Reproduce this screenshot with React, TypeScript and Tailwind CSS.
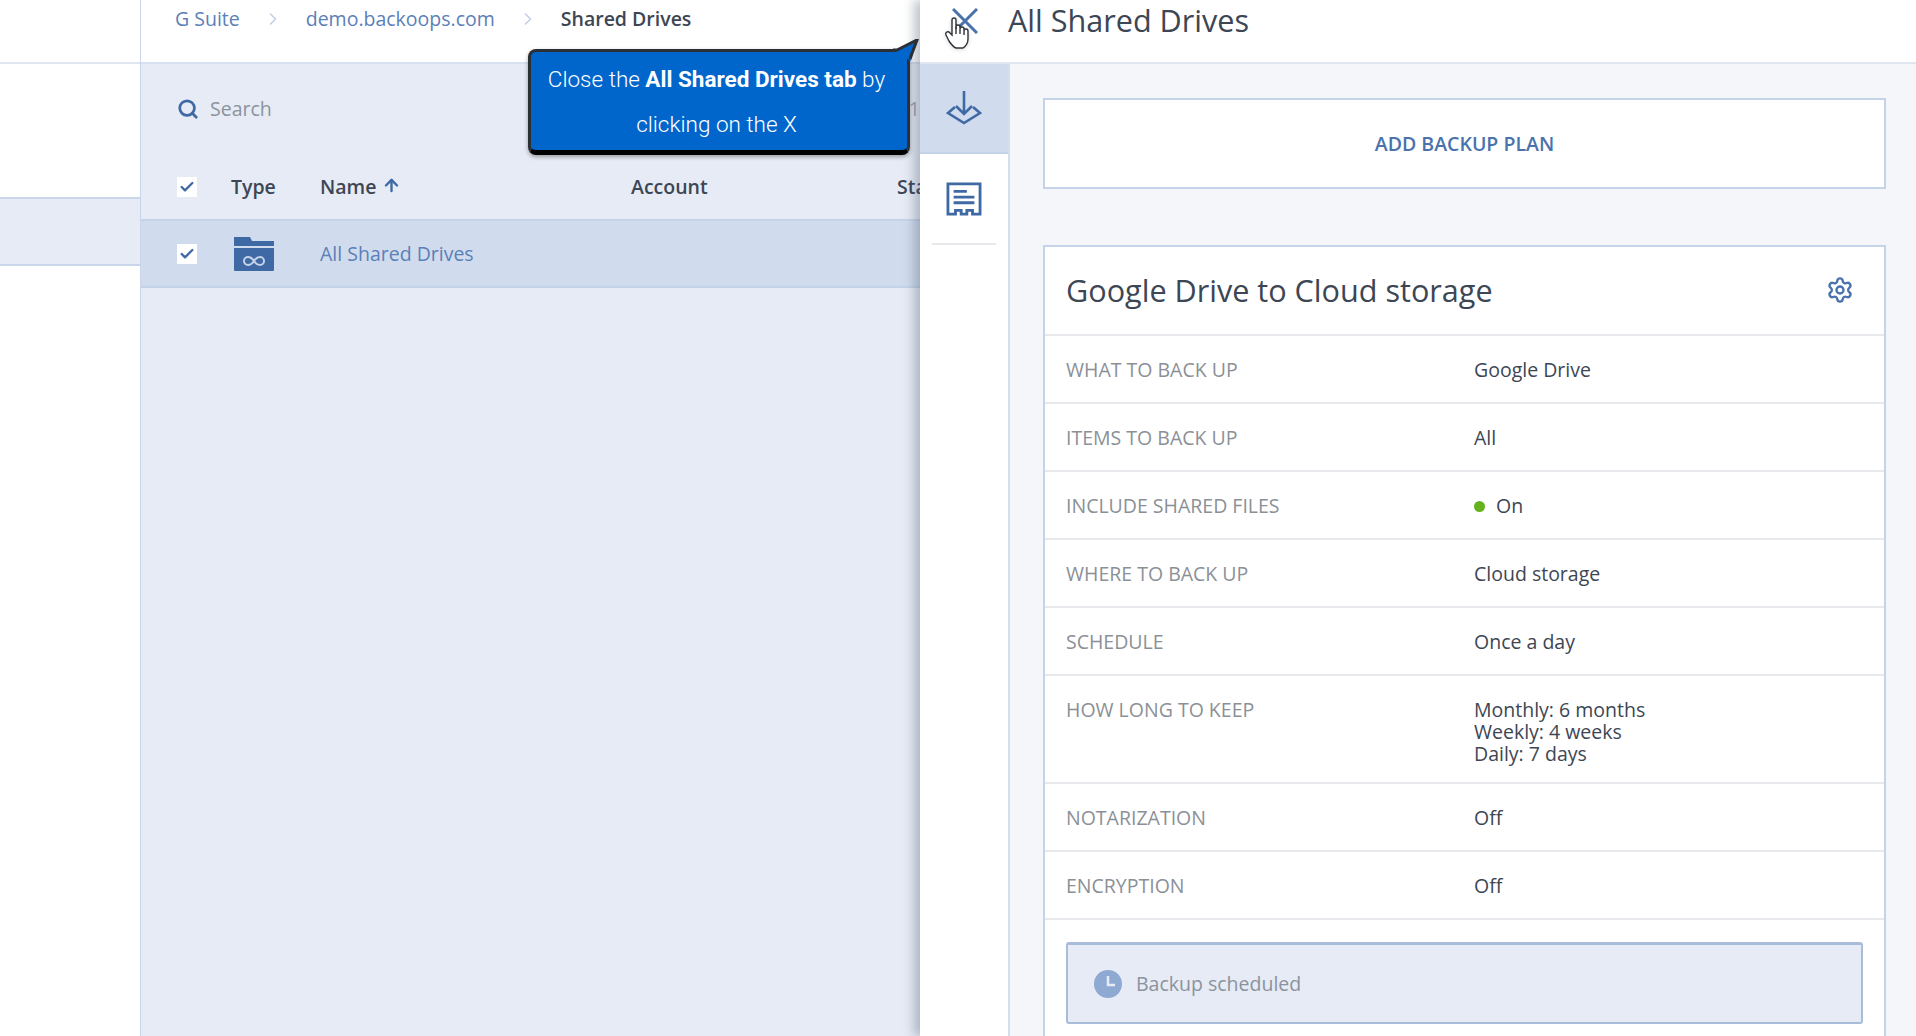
import { ArrowUp, Check, ChevronRight, Search, Settings } from "lucide-react";

const rows = [
  { label: "WHAT TO BACK UP", value: "Google Drive" },
  { label: "ITEMS TO BACK UP", value: "All" },
  { label: "INCLUDE SHARED FILES", value: "On", dot: true },
  { label: "WHERE TO BACK UP", value: "Cloud storage" },
  { label: "SCHEDULE", value: "Once a day" },
  { label: "HOW LONG TO KEEP", lines: ["Monthly: 6 months", "Weekly: 4 weeks", "Daily: 7 days"] },
  { label: "NOTARIZATION", value: "Off" },
  { label: "ENCRYPTION", value: "Off" },
];

function Checkbox() {
  return (
    <div className="flex h-[20px] w-[20px] items-center justify-center bg-white">
      <Check size={16} strokeWidth={3.5} className="text-[#3f69a5]" />
    </div>
  );
}

function Sidebar() {
  return (
    <aside className="w-[141px] shrink-0 border-r border-[#c9d6ea] bg-white">
      <div className="h-[64px] border-b-2 border-[#dfe6f1]" />
      <div className="mt-[133px] h-[69px] border-y-2 border-[#c9d6ea] bg-[#e6ebf5]" />
    </aside>
  );
}

function FileList() {
  return (
    <main className="relative w-[779px] shrink-0 overflow-hidden bg-[#e6ebf5]">
      <div className="flex h-[64px] items-start border-b-2 border-[#d8e1ef] bg-white pl-[34px] pt-[5px] text-[19.5px] leading-[28px]">
        <span className="text-[#5b80b8]">G Suite</span>
        <ChevronRight size={20} strokeWidth={2} className="mx-[23px] mt-[4px] text-[#c3d0e4]" />
        <span className="text-[#5b80b8]">demo.backoops.com</span>
        <ChevronRight size={20} strokeWidth={2} className="mx-[23px] mt-[4px] text-[#c3d0e4]" />
        <span className="font-semibold text-[#3d4654]">Shared Drives</span>
      </div>

      <div className="flex h-[91px] items-center justify-between pb-[2px] pl-[36px] text-[19.5px] text-[#8b939e]">
        <div className="flex items-center gap-[11px]">
          <Search size={22} strokeWidth={3} className="text-[#3f69a5]" />
          <span>Search</span>
        </div>
        <span className="text-[#9aa3b0]">1</span>
      </div>

      <div className="flex h-[66px] items-center border-b-2 border-[#c5d3e8] pl-[36px] text-[19.5px] font-semibold text-[#3d4654]">
        <div className="w-[54px] shrink-0"><Checkbox /></div>
        <div className="w-[89px] shrink-0">Type</div>
        <div className="flex w-[311px] shrink-0 items-center gap-[6px]">
          Name <ArrowUp size={19} strokeWidth={3} className="mb-[3px] text-[#3f69a5]" />
        </div>
        <div className="w-[266px] shrink-0">Account</div>
        <div className="shrink-0 whitespace-nowrap">Status</div>
      </div>

      <div className="flex h-[67px] items-center border-b-2 border-[#c5d3e8] bg-[#d0dced] pl-[36px] text-[19.5px] text-[#5b80b8]">
        <div className="w-[54px] shrink-0"><Checkbox /></div>
        <div className="w-[89px] shrink-0">
          <svg width="42" height="36" viewBox="0 0 42 36" className="ml-[2px]">
            <path d="M1 1h16l2 4h22v5H1z M1 12h40v22a1 1 0 0 1-1 1H2a1 1 0 0 1-1-1z" fill="#3f69a5" />
            <path d="M21 25c-2-3-4-4-6-4a4 4 0 0 0 0 8c2 0 4-1 6-4c2-3 4-4 6-4a4 4 0 0 1 0 8c-2 0-4-1-6-4z" fill="none" stroke="#c3d2e8" strokeWidth="2" />
          </svg>
        </div>
        <div>All Shared Drives</div>
      </div>
    </main>
  );
}

function Tooltip() {
  return (
    <div className="absolute left-[528px] top-[49px] z-20 w-[382px] rounded-[8px] border-[3px] border-b-[5px] border-[#2b2f36] border-b-black bg-[#0066cc] pb-[3px] pr-[5px] pt-[5px] text-center font-['Roboto',sans-serif] text-[22.5px] font-light leading-[45px] text-white shadow-[0_2px_4px_rgba(0,0,0,0.35)]">
      <svg width="26" height="30" viewBox="0 0 26 30" className="absolute right-[-12px] top-[-13px]">
        <path d="M2 13L24 2C21 9 19 14 18 22L8 16z" fill="#0066cc" stroke="none" />
        <path d="M0 11H4L24 1C21 9 19 14 17 20" fill="none" stroke="#2b2f36" strokeWidth="3" />
      </svg>
      Close the <b className="font-bold">All Shared Drives tab</b> by
      <br />
      clicking on the X
    </div>
  );
}

function DetailsPanel() {
  return (
    <section className="relative z-10 flex min-w-0 flex-1 flex-col bg-white shadow-[-6px_0_10px_rgba(70,85,110,0.35)]">
      <div className="flex h-[64px] shrink-0 items-start border-b-2 border-[#e0e6f0]">
        <div className="flex w-[88px] justify-center pt-[8px]">
          <svg width="26" height="26" viewBox="0 0 26 26" className="ml-[2px]">
            <path d="M1 1L25 25M25 1L1 25" stroke="#4a72ad" strokeWidth="3" fill="none" />
          </svg>
        </div>
        <h1 className="text-[30.6px] leading-[40px] text-[#3d4654]">All Shared Drives</h1>
      </div>

      <div className="flex min-h-0 flex-1">
        <div className="w-[90px] shrink-0 border-r-2 border-[#d3deee]">
          <div className="flex h-[90px] items-center justify-center border-b-2 border-[#c5d3e8] bg-[#d0dced]">
            <svg width="36" height="36" viewBox="0 0 36 36" fill="none" stroke="#3f69a5" strokeWidth="2.6">
              <path d="M18 1V24M10 16L18 24L26 16" />
              <path d="M9 17L2 23L18 33L34 23L27 17" />
            </svg>
          </div>
          <div className="flex h-[89px] items-center justify-center">
            <svg width="36" height="34" viewBox="0 0 38 36" fill="none" stroke="#3f69a5" strokeWidth="3">
              <path d="M2 2H36V34H28V30H22V34H16V30H10V34H2z" />
              <path d="M8 10H22M8 16H30M8 22H30" />
            </svg>
          </div>
          <div className="mx-[12px] h-[2px] bg-[#e7e9ec]" />
        </div>

        <div className="min-w-0 flex-1 overflow-hidden bg-[#f4f6f9] pl-[33px] pr-[30px] pt-[34px]">
          <div className="flex h-[91px] items-center justify-center border-2 border-[#c5d3e8] bg-white text-[19.5px] font-semibold text-[#4a72ad]">
            ADD BACKUP PLAN
          </div>

          <div className="mt-[56px] border-2 border-b-0 border-[#c5d3e8] bg-white">
            <div className="flex h-[89px] items-center justify-between border-b-2 border-[#e7e9ec] pl-[21px] pr-[30px]">
              <h2 className="text-[30.6px] text-[#3d4654]">Google Drive to Cloud storage</h2>
              <Settings size={28} className="mb-[2px] text-[#4a72ad]" />
            </div>

            {rows.map((r) => (
              <div
                key={r.label}
                className={
                  r.lines
                    ? "flex border-b-2 border-[#e7e9ec] pb-[17px] pl-[21px] pt-[23px] text-[19.5px] leading-[22px]"
                    : "flex border-b-2 border-[#e7e9ec] pb-[21px] pl-[21px] pt-[23px] text-[19.5px] leading-[22px]"
                }
              >
                <div className="w-[408px] shrink-0 text-[#8b9097]">{r.label}</div>
                {r.lines ? (
                  <div className="text-[#3d4654]">
                    {r.lines.map((l) => (
                      <div key={l}>{l}</div>
                    ))}
                  </div>
                ) : (
                  <div className="flex items-center gap-[11px] text-[#3d4654]">
                    {r.dot && <span className="h-[11px] w-[11px] rounded-full bg-[#65b21e]" />}
                    {r.value}
                  </div>
                )}
              </div>
            ))}

            <div className="px-[21px] pb-[30px] pt-[22px]">
              <div className="flex h-[82px] items-center gap-[14px] rounded-[3px] border-2 border-t-[3px] border-[#a9bcd9] bg-[#e6ebf5] pl-[26px] text-[19.5px] text-[#8b939e]">
                <svg width="28" height="28" viewBox="0 0 28 28">
                  <circle cx="14" cy="14" r="14" fill="#8eaad3" />
                  <path d="M14 6V15H21" fill="none" stroke="#e6ebf5" strokeWidth="2.5" />
                </svg>
                Backup scheduled
              </div>
            </div>
          </div>
        </div>
      </div>
    </section>
  );
}

export default function App() {
  return (
    <div className="relative flex h-[1036px] w-[1916px] overflow-hidden bg-white font-['Open_Sans',sans-serif]">
      <Sidebar />
      <FileList />
      <DetailsPanel />
      <Tooltip />
      {/* mouse cursor from the tutorial recording */}
      <svg
        width="26"
        height="32"
        viewBox="0 0 26 32"
        className="absolute left-[945px] top-[17px] z-30 drop-shadow-sm"
        fill="white"
        stroke="#2f3338"
        strokeWidth="1.4"
      >
        <path d="M7 3a2 2 0 0 1 4 0v9v-2a2 2 0 0 1 4 0v2a2 2 0 0 1 4 0v2a2 2 0 0 1 4 0v8c0 4-2 7-5 9H11c-3-1-5-4-7-7L1 18c-1-2 1-4 3-3l3 3z" />
        <path d="M11 10v7M15 12v5M19 14v4" fill="none" />
      </svg>
    </div>
  );
}
